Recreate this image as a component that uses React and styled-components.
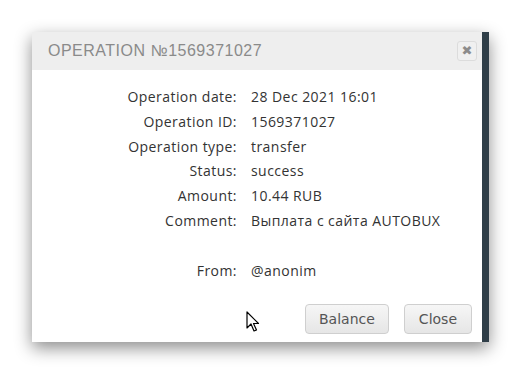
import React from 'react';
import styled, { createGlobalStyle } from 'styled-components';

const GlobalStyle = createGlobalStyle`
  html, body {
    margin: 0;
    padding: 0;
    background: #ffffff;
  }
`;

const Page = styled.div`
  padding: 32px 0 0 32px;
  position: relative;
  width: 521px;
  height: 374px;
  box-sizing: border-box;
  overflow: hidden;
`;

const Dialog = styled.div`
  width: 457px;
  box-sizing: border-box;
  background: #ffffff;
  border-right: 7px solid #2f3e48;
  box-shadow: 0 6px 16px rgba(0, 0, 0, 0.45);
`;

const Header = styled.div`
  height: 38px;
  background: #eeeeee;
  display: flex;
  align-items: center;
  justify-content: space-between;
  padding: 0 5px 0 16px;
`;

const Title = styled.h3`
  margin: 0;
  font-family: 'Liberation Sans', Arial, sans-serif;
  font-weight: 400;
  font-size: 16px;
  letter-spacing: 0.5px;
  color: #8a8a8a;
  text-transform: uppercase;
`;

const CloseX = styled.button`
  width: 20px;
  height: 20px;
  padding: 0;
  border: 1px solid #dcdcdc;
  border-radius: 3px;
  background: #f0f0f0;
  color: #8c8c8c;
  font-family: 'DejaVu Sans', sans-serif;
  font-size: 13px;
  font-weight: 700;
  line-height: 18px;
  display: flex;
  align-items: center;
  justify-content: center;
  cursor: pointer;
`;

const Body = styled.div`
  padding: 15px 0 0 0;
`;

const Grid = styled.dl`
  margin: 0;
  display: grid;
  grid-template-columns: 205px 1fr;
  column-gap: 14px;
  font-family: 'Open Sans', 'Liberation Sans', sans-serif;
  font-size: 14px;
  letter-spacing: 0.45px;
  line-height: 24.8px;
  color: #333333;
`;

const Label = styled.dt`
  text-align: right;
`;

const Value = styled.dd`
  margin: 0;
`;

const Spacer = styled.div`
  grid-column: 1 / 3;
  height: 24.8px;
`;

const Footer = styled.div`
  display: flex;
  justify-content: flex-end;
  gap: 15px;
  padding: 21px 10px 8px 0;
`;

const Button = styled.button`
  height: 30px;
  padding: 0 ${(p) => p.$pad}px;
  border: 1px solid #cfcfcf;
  border-radius: 4px;
  background: linear-gradient(#f6f6f6, #e6e6e6);
  color: #555555;
  font-family: 'DejaVu Sans', sans-serif;
  font-size: 14px;
  cursor: pointer;
`;

const Cursor = styled.svg`
  position: absolute;
  left: 246px;
  top: 311px;
`;

const rows = [
  ['Operation date:', '28 Dec 2021 16:01'],
  ['Operation ID:', '1569371027'],
  ['Operation type:', 'transfer'],
  ['Status:', 'success'],
  ['Amount:', '10.44 RUB'],
  ['Comment:', 'Выплата с сайта AUTOBUX'],
];

export default function App() {
  return (
    <Page>
      <GlobalStyle />
      <Dialog>
        <Header>
          <Title>Operation №1569371027</Title>
          <CloseX>✖</CloseX>
        </Header>
        <Body>
          <Grid>
            {rows.map(([k, v]) => (
              <React.Fragment key={k}>
                <Label>{k}</Label>
                <Value>{v}</Value>
              </React.Fragment>
            ))}
            <Spacer />
            <Label>From:</Label>
            <Value>@anonim</Value>
          </Grid>
          <Footer>
            <Button $pad={13}>Balance</Button>
            <Button $pad={14}>Close</Button>
          </Footer>
        </Body>
      </Dialog>
      <Cursor width="14" height="22" viewBox="0 0 14 22">
        <path d="M1 1 L1 17 L5 13 L8 20 L10.5 19 L7.5 12.5 L12.5 12.5 Z" fill="#fff" stroke="#000" strokeWidth="1.2" strokeLinejoin="round" />
      </Cursor>
    </Page>
  );
}
